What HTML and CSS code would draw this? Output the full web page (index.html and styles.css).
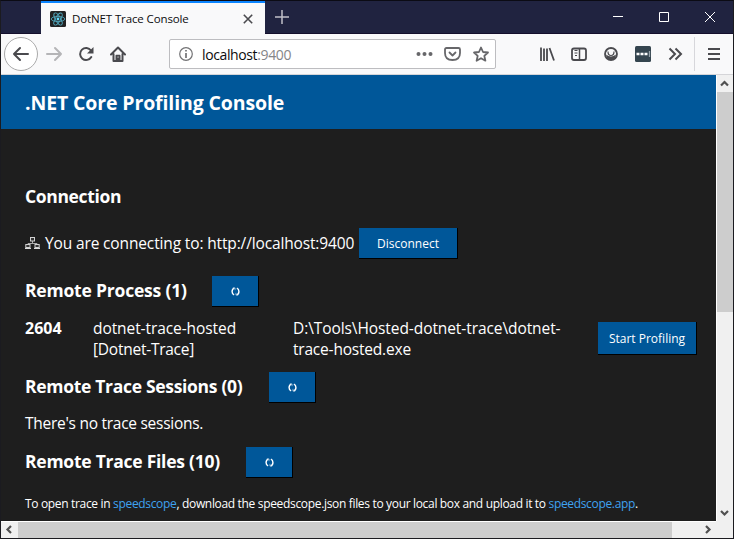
FILE: index.html
```html
<!DOCTYPE html>
<html lang="en">
<head>
<meta charset="utf-8">
<title>DotNET Trace Console</title>
<link rel="stylesheet" href="styles.css">
</head>
<body>
<div class="window">
  <div class="titlebar">
    <div class="tab">
      <svg class="favicon" width="16" height="16" viewBox="0 0 16 16"><rect width="16" height="16" rx="1.5" fill="#222"/><g fill="none" stroke="#4fa5ba" stroke-width=".9"><ellipse cx="8" cy="8" rx="6.8" ry="2.6"/><ellipse cx="8" cy="8" rx="6.8" ry="2.6" transform="rotate(60 8 8)"/><ellipse cx="8" cy="8" rx="6.8" ry="2.6" transform="rotate(120 8 8)"/></g><circle cx="8" cy="8" r="1.4" fill="#61dafb"/></svg>
      <span class="tab-title">DotNET Trace Console</span>
      <svg class="tab-close" width="10" height="10" viewBox="0 0 10 10"><path d="M.8.8l8.4 8.4M9.2.8L.8 9.2" stroke="#4a4a4e" stroke-width="1.6"/></svg>
    </div>
    <svg class="new-tab" width="14" height="14" viewBox="0 0 14 14"><path d="M7 0v14M0 7h14" stroke="#c0c0c8" stroke-width="1.5"/></svg>
    <svg class="controls" width="103" height="12" viewBox="0 0 103 12" fill="none" stroke="#fff"><path d="M0 5.5h10M46.500 1.500h9v9h-9zM92 1l10 10M102 1L92 11"/></svg>
  </div>
  <div class="toolbar">
    <div class="back"><svg width="18" height="16" viewBox="0 0 18 16" fill="none" stroke="#4a4a4e" stroke-width="2" stroke-linecap="round" stroke-linejoin="round"><path d="M16 8H2M8 2L2 8l6 6"/></svg></div>
    <svg class="forward" width="18" height="16" viewBox="0 0 18 16" fill="none" stroke="#b5b5b7" stroke-width="2" stroke-linecap="round" stroke-linejoin="round"><path d="M2 8h14M10 2l6 6-6 6"/></svg>
    <svg class="reload" width="16" height="16" viewBox="0 0 16 16"><path d="M13 4.500A6 6 0 1 0 13.300 11" fill="none" stroke="#4a4a4e" stroke-width="2" stroke-linecap="round"/><path d="M15.500 1v6.500H9z" fill="#4a4a4e"/></svg>
    <svg class="home" width="16" height="16" viewBox="0 0 16 16" fill="none" stroke="#4a4a4e" stroke-width="2" stroke-linecap="round" stroke-linejoin="round"><path d="M1 8.500L8 1.500l7 7M3.500 8v7h9V8"/><path d="M6.300 15V9.500h3.400V15" stroke-width="1.600" fill="#4a4a4e"/><path d="M8 11h.1" stroke="#f9f9fa" stroke-width="1.200"/></svg>
    <div class="address">
      <svg class="info" width="14" height="14" viewBox="0 0 14 14"><circle cx="7" cy="7" r="6.300" fill="none" stroke="#737375" stroke-width="1.200"/><path d="M7 6v5M7 3v1.600" stroke="#737375" stroke-width="1.700"/></svg>
      <span class="url">localhost<span class="port">:9400</span></span>
      <svg class="page-actions" width="73" height="16" viewBox="0 0 73 16"><g fill="#67676a"><circle cx="2.500" cy="8" r="2"/><circle cx="8.500" cy="8" r="2"/><circle cx="14.500" cy="8" r="2"/></g><g fill="none" stroke="#67676a" stroke-width="1.800" stroke-linejoin="round" stroke-linecap="round"><path d="M30.500 2h12q1.500 0 1.500 1.500V7q0 7-7.500 7T29 7V3.500Q29 2 30.500 2zM33.500 6.500l3 3 3-3"/><path d="M65 1.500l2 4.500 5 .5-3.700 3.400 1.100 4.800-4.400-2.500-4.400 2.500 1.100-4.800L58 6.500l5-.5z"/></g></svg>
    </div>
    <svg class="tools" width="182" height="34" viewBox="0 0 182 34" fill="none" stroke="#4a4a4e" stroke-width="1.800">
      <path d="M2 10.500V24M5 11.500V24M8 11.500V24M10.500 11l4.500 12.500"/>
      <rect x="33" y="11.500" width="14" height="11.500" rx="2"/><path d="M40.500 11.500V23" stroke-width="1.500"/><path d="M35.500 13.500h3M35.500 16h3M36 18.500h2" stroke-width="1"/>
      <circle cx="72" cy="17" r="6"/><path d="M69 14.500q0 4 3 4t3-4" stroke-width="1.200"/><path d="M67 17.500q5 4 10 0l-1 4q-4 3-8 0z" fill="#4a4a4e" stroke="none"/>
      <rect x="96" y="9" width="16" height="16" rx="1.500" fill="#35454f" stroke="none"/><path d="M97.500 17h3M101.500 17h3M105.500 17h3" stroke="#fff" stroke-width="2.500"/><path d="M110.500 14v6" stroke="#96a2aa" stroke-width="1.300"/>
      <path d="M130.500 11.500L136 17l-5.500 5.500M136.500 11.500L142 17l-5.500 5.500" stroke-width="2"/>
      <path d="M155.500 0v34" stroke="#d7d7db" stroke-width="1"/>
      <path d="M169 12h12M169 17h12M169 22h12" stroke-width="2"/>
    </svg>
  </div>
  <div class="viewport">
    <main class="page">
      <header class="banner"><span class="banner-title">.NET Core Profiling Console</span></header>
      <section class="content">
        <h2 class="heading connection">Connection</h2>
        <div class="status">
          <svg class="network" width="15" height="12" viewBox="0 0 15 12"><path d="M7.500 4v3M3 8V6.500h9V8" fill="none" stroke="#aaa"/><g fill="#333" stroke="#d0d0d0"><rect x="5.500" y=".5" width="4" height="3.500"/><rect x=".8" y="7.500" width="4.200" height="3"/><rect x="10" y="7.500" width="4.200" height="3"/></g><path d="M0 11.500h6M9 11.500h6" stroke="#ddd"/></svg>
          <span class="status-text">You are connecting to: http://localhost:9400</span>
          <button class="button disconnect"><span>Disconnect</span></button>
        </div>
        <div class="heading-row processes"><h2 class="heading h-process">Remote Process (1)</h2><button class="button refresh"><svg width="9" height="9" viewBox="0 0 10 10"><path d="M3.800 1.200Q1.200 2 1.200 5t2.300 3.800M6.200 8.800Q8.800 8 8.800 5T6.500 1.200" fill="none" stroke="#fff" stroke-width="1.600"/><path d="M2 1h2.500v2.500M8 9H5.500V6.500" fill="none" stroke="#cfe3f2" stroke-width=".7"/></svg></button></div>
        <div class="process">
          <strong class="pid">2604</strong>
          <span class="name"><span class="n1">dotnet-trace-hosted</span><br><span class="n2">[Dotnet-Trace]</span></span>
          <span class="path"><span class="p1">D:\Tools\Hosted-dotnet-trace\dotnet-</span><br><span class="p2">trace-hosted.exe</span></span>
          <button class="button start"><span>Start Profiling</span></button>
        </div>
        <div class="heading-row sessions"><h2 class="heading h-sessions">Remote Trace Sessions (0)</h2><button class="button refresh"><svg width="9" height="9" viewBox="0 0 10 10"><path d="M3.800 1.200Q1.200 2 1.200 5t2.300 3.800M6.200 8.800Q8.800 8 8.800 5T6.500 1.200" fill="none" stroke="#fff" stroke-width="1.600"/><path d="M2 1h2.500v2.500M8 9H5.500V6.500" fill="none" stroke="#cfe3f2" stroke-width=".7"/></svg></button></div>
        <p class="empty">There's no trace sessions.</p>
        <div class="heading-row files"><h2 class="heading h-files">Remote Trace Files (10)</h2><button class="button refresh"><svg width="9" height="9" viewBox="0 0 10 10"><path d="M3.800 1.200Q1.200 2 1.200 5t2.300 3.800M6.200 8.800Q8.800 8 8.800 5T6.500 1.200" fill="none" stroke="#fff" stroke-width="1.600"/><path d="M2 1h2.500v2.500M8 9H5.500V6.500" fill="none" stroke="#cfe3f2" stroke-width=".7"/></svg></button></div>
        <p class="note">To open trace in <a>speedscope</a>, download the speedscope.json files to your local box and upload it to <a>speedscope.app</a>.</p>
      </section>
    </main>
    <div class="vscroll">
      <svg width="17" height="17" viewBox="0 0 17 17"><path d="M4 10.500L7.500 7l3.500 3.500" fill="none" stroke="#505050" stroke-width="2.200"/></svg>
      <div class="vthumb"></div>
      <svg width="17" height="17" viewBox="0 0 17 17"><path d="M4 7l3.500 3.500L11 7" fill="none" stroke="#505050" stroke-width="2.200"/></svg>
    </div>
    <div class="hscroll">
      <svg width="17" height="17" viewBox="0 0 17 17"><path d="M10 4L6.500 7.500 10 11" fill="none" stroke="#505050" stroke-width="2.200"/></svg>
      <div class="hthumb"></div>
      <svg width="17" height="17" viewBox="0 0 17 17"><path d="M7 4l3.500 3.500L7 11" fill="none" stroke="#505050" stroke-width="2.200"/></svg>
    </div>
    <div class="corner"></div>
  </div>
</div>
</body>
</html>
```
FILE: styles.css
```css
* { box-sizing: border-box; }
body { margin: 0; font-family: "Open Sans", "Noto Sans", sans-serif; font-size: 15.5px; }
svg { display: block; flex: none; }
h2, p { margin: 0; }
.window { width: 734px; height: 539px; background: #1b1b20; border: 1px solid #1b1b20; border-top-color: #0b0b14; overflow: hidden; }
.titlebar { height: 33px; background: #202340; border-bottom: 1px solid #140f2c; display: flex; align-items: center; }
.tab { width: 224px; height: 33px; margin-left: 40px; margin-bottom: -1px; background: #f9f9fa; border-top: 2px solid #0a84ff; display: flex; align-items: center; padding: 0 12px 0 9px; }
.tab-title { margin-left: 6px; flex: 1; font-size: 11.5px; letter-spacing: -.12px; white-space: nowrap; color: #0c0c0d; }
.new-tab { margin-left: 10px; }
.controls { margin-left: auto; margin-right: 17px; }
.toolbar { height: 41px; background: #f9f9fa; border-bottom: 1px solid #d5d5d8; display: flex; align-items: center; }
.back { width: 34px; height: 34px; margin-left: 3px; border: 1px solid #aaa; border-radius: 50%; background: #fff; display: flex; align-items: center; justify-content: center; }
.forward { margin-left: 7px; }
.reload { margin-left: 15px; }
.home { margin-left: 16px; }
.address { width: 327px; height: 30px; margin-left: 43px; border: 1px solid #bdbdc0; border-radius: 2px; background: #fff; display: flex; align-items: center; padding: 0 6px 0 9px; }
.url { margin-left: 9px; font-size: 14px; letter-spacing: -.38px; color: #0c0c0d; flex: 1; }
.port { color: #858588; }
.tools { margin-left: 43px; }
.viewport { height: 463px; display: grid; grid-template-columns: 715px 17px; grid-template-rows: 446px 17px; }
.page { background: #1e1e1e; color: #fff; overflow: hidden; }
.banner { height: 54px; background: #005799; padding-left: 24px; display: flex; align-items: center; }
.banner-title { font-size: 19.5px; font-weight: 700; letter-spacing: -.13px; padding-top: 1px; }
.content { padding: 53px 19px 0 24px; white-space: nowrap; }
.heading { font-size: 17.5px; font-weight: 700; line-height: 28px; padding-bottom: 4px; }
.connection { height: 30px; padding: 0; letter-spacing: -.35px; }
.status { height: 31px; margin-top: 16px; display: flex; align-items: center; }
.network { margin-bottom: 1px; }
.status-text { width: 309px; margin: 0 5px; padding-bottom: 2px; letter-spacing: -.14px; }
.button { height: 31px; padding: 0; border: solid #000; border-width: 0 1px 1px 0; background: #005799; color: #fff; font-family: "Open Sans", sans-serif; font-size: 12px; display: flex; align-items: center; justify-content: center; }
.disconnect { width: 99px; }
.refresh { width: 47px; padding-top: 1px; }
.heading-row { height: 31px; display: flex; align-items: center; gap: 24px; }
.processes { margin-top: 17px; }
.h-process { width: 163px; letter-spacing: -.2px; }
.h-sessions { width: 220px; letter-spacing: -.31px; }
.h-files { width: 197px; letter-spacing: -.25px; }
.process { margin-top: 11px; height: 43px; display: grid; grid-template-columns: 68px 200px 305px 99px; line-height: 21px; }
.pid { font-size: 16px; }
.n1, .p1 { letter-spacing: -.08px; }
.n2 { letter-spacing: -.25px; }
.p2 { letter-spacing: -.2px; }
.start { margin-top: 4px; width: 99px; height: 33px; }
.sessions { margin-top: 11px; }
.empty { margin-top: 9px; height: 22px; line-height: 22px; letter-spacing: -.27px; }
.files { margin-top: 13px; }
.note { margin-top: 17px; height: 18px; line-height: 18px; font-size: 12px; letter-spacing: -.33px; }
.note a { color: #3fa2f0; }
.vscroll { background: #f0f0f0; border-left: 1px solid #fff; }
.vthumb { height: 220px; margin-bottom: 192px; background: #cdcdcd; }
.hscroll { background: #f0f0f0; border-top: 1px solid #fff; display: flex; }
.hthumb { width: 654px; background: #cdcdcd; margin-right: auto; }
.corner { background: #f0f0f0; }
```
